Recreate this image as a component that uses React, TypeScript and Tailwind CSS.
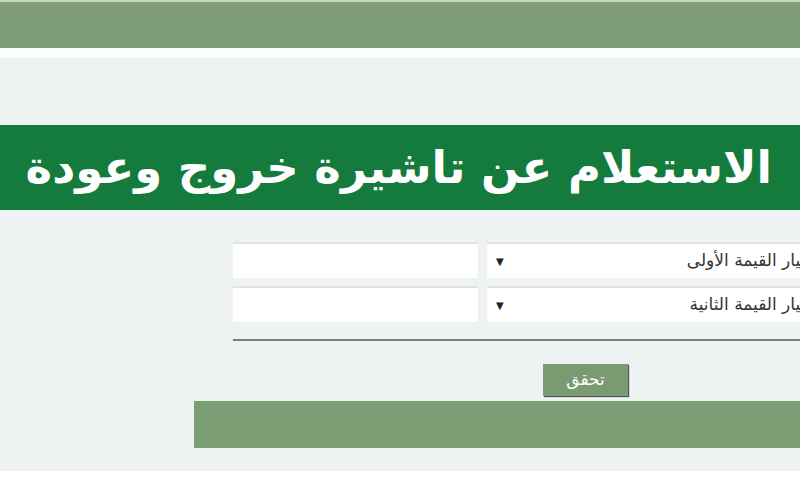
export default function App() {
  const rows = ['اختيار القيمة الأولى', 'اختيار القيمة الثانية']
  return (
    <div className="w-[800px] h-[500px] overflow-hidden bg-white" style={{ fontFamily: '"DejaVu Sans", "Noto Sans", sans-serif' }}>
      <div className="h-[2px] bg-[#c8d5c4]" />
      <div className="h-[46px] bg-[#7f9e77]" />
      <div className="h-[10px] bg-[#fbfdfb]" />
      <div className="h-[413px] bg-[#eef2f2] flex flex-col">
        <div className="mt-[67px] h-[85px] bg-[#157b3d] flex items-center justify-end pr-[28px]">
          <h1 dir="rtl" className="text-white font-bold text-[45px] leading-none whitespace-nowrap">
            الاستعلام عن تاشيرة خروج وعودة
          </h1>
        </div>
        <div className="mt-[32px] flex flex-col gap-[8px] pl-[233px]">
          {rows.map((label) => (
            <div key={label} className="flex gap-[9px] h-[36px]">
              <div className="w-[245px] shrink-0 bg-white border-t-2 border-[#dfe3e3]" />
              <div className="w-[344px] shrink-0 bg-white border-t-2 border-[#dfe3e3] flex items-center justify-between pl-[9px] pr-[10px]">
                <span className="text-[10px] text-[#222]">▼</span>
                <span dir="rtl" className="text-[17px] text-[#333] whitespace-nowrap">{label}</span>
              </div>
            </div>
          ))}
        </div>
        <div className="ml-[233px] mt-[17px] h-[2px] bg-[#7a7d7a] shrink-0" />
        <div className="ml-[543px] mt-[23px] w-[85px] h-[32px] bg-[#7a9a72] shadow-[1px_1px_1px_#555] flex items-center justify-center shrink-0">
          <span dir="rtl" className="text-white text-[17px]">تحقق</span>
        </div>
        <div className="ml-[194px] mt-[5px] h-[47px] bg-[#7b9d74] shrink-0" />
      </div>
    </div>
  )
}
